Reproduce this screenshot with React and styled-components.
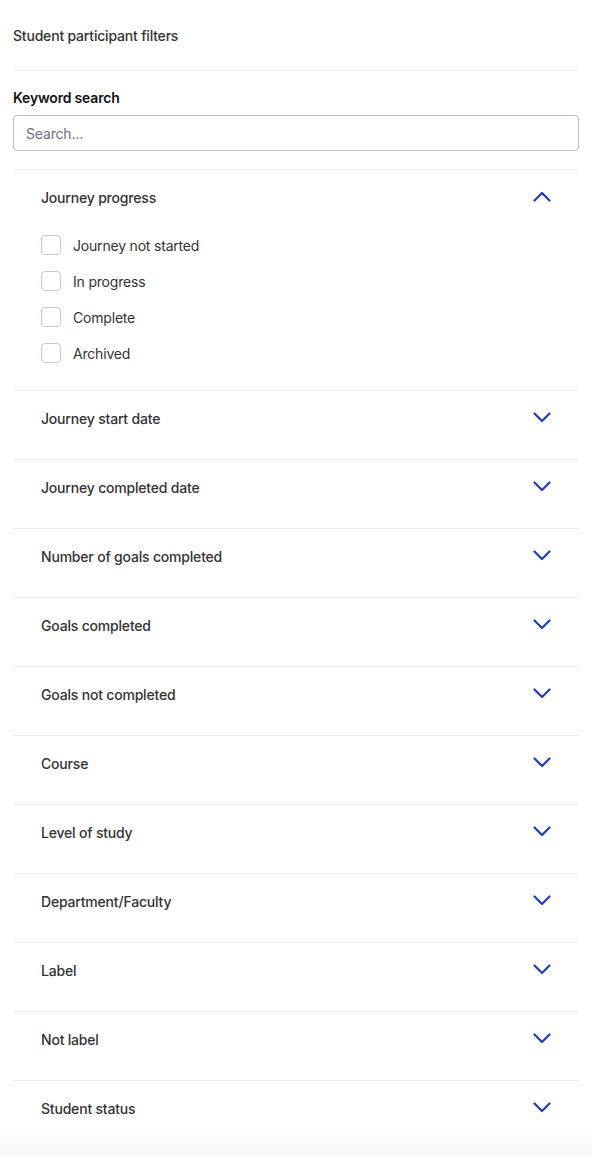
import React, { useState } from 'react';
import styled, { createGlobalStyle } from 'styled-components';

const GlobalStyle = createGlobalStyle`
	* { box-sizing: border-box; }
	body {
		margin: 0;
		background: #ffffff;
		font-family: Inter, 'Noto Sans', sans-serif;
		letter-spacing: -0.012em;
		color: #333333;
	}
`;

const sections = [
	'Journey start date',
	'Journey completed date',
	'Number of goals completed',
	'Goals completed',
	'Goals not completed',
	'Course',
	'Level of study',
	'Department/Faculty',
	'Label',
	'Not label',
	'Student status',
];

const progressOptions = ['Journey not started', 'In progress', 'Complete', 'Archived'];

function Chevron({ up }) {
	return (
		<svg width="18" height="11" viewBox="0 0 18 11" fill="none">
			<polyline
				points={up ? '1.5,9.5 9,2 16.5,9.5' : '1.5,1.5 9,9 16.5,1.5'}
				stroke="#1d3bcf"
				strokeWidth="2.2"
				strokeLinecap="round"
				strokeLinejoin="round"
			/>
		</svg>
	);
}

function Section({ title, open, onToggle, children }) {
	return (
		<SectionWrap>
			<SectionHead onClick={onToggle}>
				<SectionTitle>{title}</SectionTitle>
				<Chevron up={open} />
			</SectionHead>
			{open && <SectionBody>{children}</SectionBody>}
		</SectionWrap>
	);
}

export default function App() {
	const [open, setOpen] = useState({ 'Journey progress': true });
	const toggle = (k) => setOpen((o) => ({ ...o, [k]: !o[k] }));

	return (
		<Page>
			<GlobalStyle />
			<PanelTitle>Student participant filters</PanelTitle>
			<SearchBlock>
				<Label>Keyword search</Label>
				<SearchInput placeholder="Search..." />
			</SearchBlock>
			<Section title="Journey progress" open={!!open['Journey progress']} onToggle={() => toggle('Journey progress')}>
				{progressOptions.map((opt) => (
					<CheckRow key={opt}>
						<Box type="checkbox" />
						<span>{opt}</span>
					</CheckRow>
				))}
			</Section>
			{sections.map((s) => (
				<Section key={s} title={s} open={!!open[s]} onToggle={() => toggle(s)}>
					<Empty>No options</Empty>
				</Section>
			))}
			<Fade />
		</Page>
	);
}

const Page = styled.div`
	padding: 0 13px 14px;
`;

const PanelTitle = styled.div`
	height: 71px;
	padding-top: 27px;
	font-size: 14px;
	font-weight: 500;
	line-height: 18px;
	color: #333;
	border-bottom: 1px solid #ececec;
`;

const SearchBlock = styled.div`
	padding: 18px 0 18px;
`;

const Label = styled.div`
	font-size: 14px;
	font-weight: 600;
	line-height: 18px;
	color: #111;
	margin-bottom: 8px;
`;

const SearchInput = styled.input`
	display: block;
	width: 100%;
	height: 36px;
	border: 1px solid #bbb8cf;
	border-radius: 4px;
	padding: 0 12px;
	font-family: Inter, sans-serif;
	letter-spacing: -0.012em;
	font-size: 14px;
	color: #333;
	outline: none;
	&::placeholder { color: #6e6c88; }
`;

const SectionWrap = styled.div`
	border-top: 1px solid #ececec;
`;

const SectionHead = styled.div`
	display: flex;
	align-items: center;
	justify-content: space-between;
	padding: 19px 28px 31px 28px;
	cursor: pointer;
	svg { margin-top: -4px; }
`;

const SectionTitle = styled.div`
	font-size: 14px;
	font-weight: 500;
	line-height: 18px;
	color: #333;
`;

const SectionBody = styled.div`
	padding: 0 28px 19px;
	margin-top: -11px;
`;

const CheckRow = styled.label`
	display: flex;
	align-items: center;
	gap: 12px;
	height: 36px;
	font-size: 14px;
	color: #333;
`;

const Box = styled.input`
	appearance: none;
	margin: 0;
	width: 20px;
	height: 20px;
	border: 1px solid #c8c5d8;
	border-radius: 4px;
	background: #fff;
`;

const Empty = styled.div`
	font-size: 13px;
	color: #777;
`;

const Fade = styled.div`
	position: fixed;
	left: 0;
	right: 0;
	bottom: 0;
	height: 28px;
	pointer-events: none;
	background: linear-gradient(to bottom, rgba(248, 248, 248, 0), #f8f8f8);
`;
